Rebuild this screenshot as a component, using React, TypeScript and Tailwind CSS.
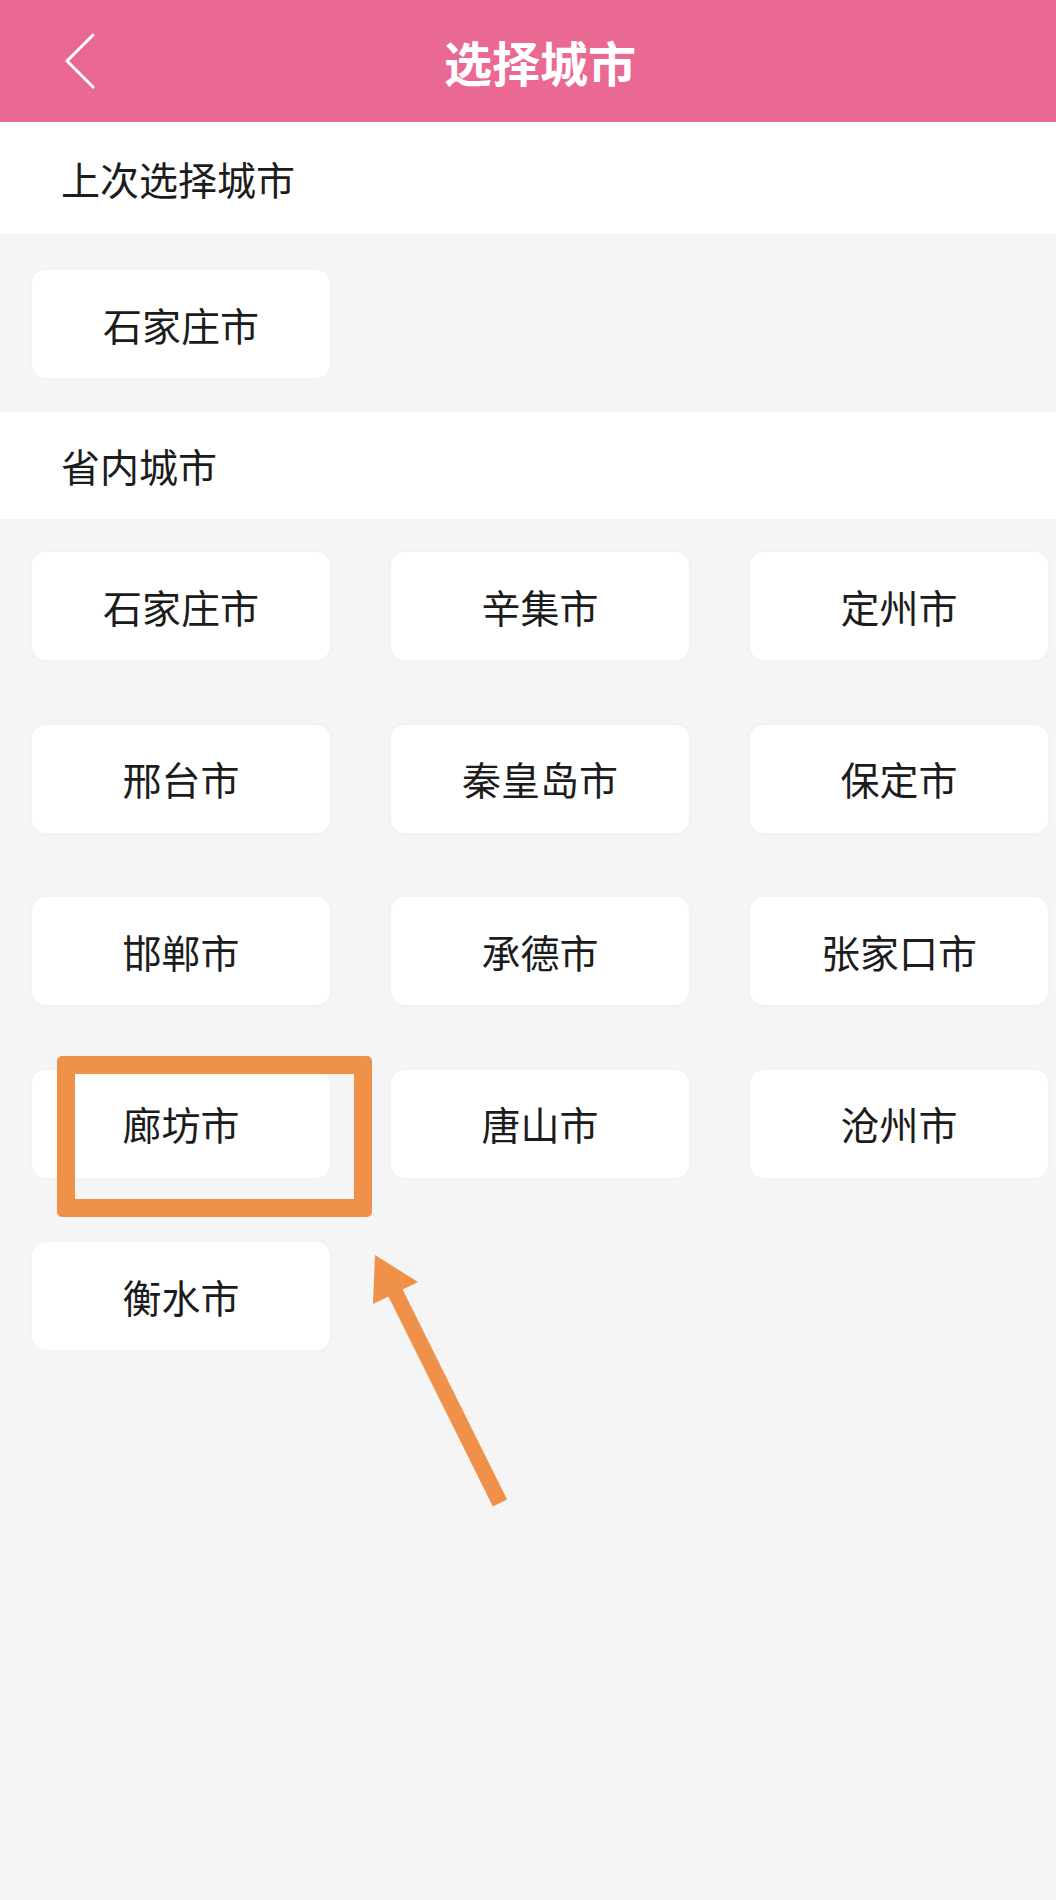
import React from 'react';

const provinceCities = [
  '石家庄市', '辛集市', '定州市',
  '邢台市', '秦皇岛市', '保定市',
  '邯郸市', '承德市', '张家口市',
  '廊坊市', '唐山市', '沧州市',
  '衡水市',
];

function CityCard({ name, marked }: { name: string; marked?: boolean }) {
  return (
    <div className="relative flex h-[108px] w-[298px] items-center justify-center rounded-[14px] bg-white text-[39px] leading-none text-[#1c1c1c] shadow-[0_0_6px_rgba(0,0,0,0.03)]">
      {name}
      {marked && (
        <>
          <div className="absolute left-[25px] top-[-14px] h-[161px] w-[315px] rounded-[5px] border-[18px] border-[#ef9149]" />
          <svg
            className="absolute left-[328px] top-[175px]"
            width="160"
            height="275"
            viewBox="0 0 160 275"
          >
            <polygon
              points="15,10 58,37 42.6,44.4 147.1,254.4 132.9,261.6 28.4,51.6 13,59"
              fill="#ef9149"
            />
          </svg>
        </>
      )}
    </div>
  );
}

export default function App() {
  return (
    <div
      className="min-h-[1900px] w-full bg-[#f5f5f5]"
      style={{ fontFamily: '"Noto Sans CJK SC", "Noto Sans", sans-serif' }}
    >
      <header className="flex h-[122px] items-center bg-[#e96993]">
        <div className="flex w-[120px] items-center pl-[64px]">
          <svg width="32" height="56" viewBox="0 0 32 56" fill="none">
            <polyline
              points="29,2 3,28 29,54"
              stroke="white"
              strokeWidth="3"
              strokeLinecap="round"
              strokeLinejoin="round"
            />
          </svg>
        </div>
        <h1 className="flex-1 text-center text-[48px] font-bold leading-none text-white">选择城市</h1>
        <div className="w-[96px]" />
      </header>

      <div className="flex h-[112px] items-center bg-white pl-[61px] text-[39px] leading-none text-[#1c1c1c]">
        上次选择城市
      </div>
      <div className="pb-[34px] pl-[32px] pt-[36px]">
        <CityCard name="石家庄市" />
      </div>

      <div className="flex h-[107px] items-center bg-white pl-[61px] text-[39px] leading-none text-[#1c1c1c]">
        省内城市
      </div>
      <div className="grid grid-cols-[repeat(3,298px)] gap-x-[61px] gap-y-[64.5px] pl-[32px] pt-[33px]">
        {provinceCities.map((c) => (
          <CityCard key={c} name={c} marked={c === '廊坊市'} />
        ))}
      </div>
    </div>
  );
}
